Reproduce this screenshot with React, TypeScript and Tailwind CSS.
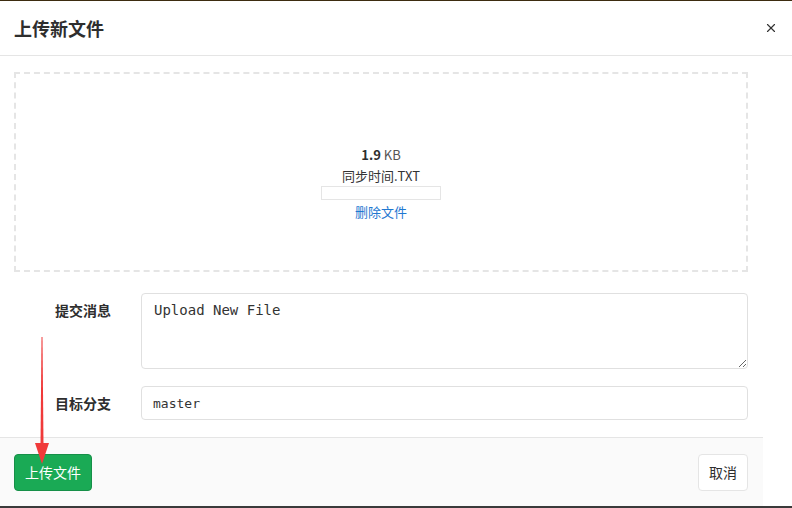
import { X } from "lucide-react";

const cjk = { fontFamily: '"Noto Sans CJK SC", "Noto Sans", sans-serif' };
const mono = { fontFamily: '"DejaVu Sans Mono", "Liberation Mono", monospace' };

function Arrow() {
  return (
    <svg className="absolute left-[30px] top-[334px]" width="24" height="132" viewBox="0 0 24 132">
      <polygon points="11.5,2 12.5,2 13.5,110 10.5,110" fill="#f03a3a" />
      <polygon points="5,108 19,108 12,129" fill="#f03a3a" />
    </svg>
  );
}

export default function App() {
  return (
    <div className="relative w-[792px] h-[508px] flex flex-col bg-white text-[#2e2e2e] border-t border-[#3d2c10] border-b-2 border-b-[#3a3a3a] overflow-hidden" style={cjk}>
      <div className="h-[55px] shrink-0 flex items-center justify-between px-[14px] border-b border-[#e5e5e5]">
        <h1 className="text-[18px] font-bold text-[#2e2e2e]">上传新文件</h1>
        <X className="w-[14px] h-[14px] text-[#333]" strokeWidth={2} />
      </div>

      <div className="flex-1 pl-[14px] pr-[44px] pt-[16px]">
        <div className="h-[200px] border-2 border-dashed border-[#e5e5e5] flex flex-col items-center pt-[70px] text-[13px] leading-[21px]">
          <div className="text-[#555]">
            <span className="font-bold text-[#2e2e2e]">1.9</span> KB
          </div>
          <div className="text-[#333]">同步时间.TXT</div>
          <div className="w-[120px] h-[14px] border border-[#e5e5e5]" />
          <a className="text-[#1f78d1] mt-[1px]">删除文件</a>
        </div>

        <div className="mt-[21px] flex">
          <label className="w-[97px] shrink-0 text-right text-[14px] font-bold pt-[7px]">提交消息</label>
          <textarea
            className="ml-[30px] flex-1 h-[76px] border border-[#e0e0e0] rounded-[4px] px-[12px] py-[6px] text-[14px] text-[#333] outline-none"
            style={mono}
            defaultValue="Upload New File"
          />
        </div>

        <div className="mt-[17px] flex items-center">
          <label className="w-[97px] shrink-0 text-right text-[14px] font-bold">目标分支</label>
          <input
            className="ml-[30px] flex-1 h-[34px] border border-[#e0e0e0] rounded-[4px] px-[11px] text-[13px] text-[#333] outline-none"
            style={mono}
            defaultValue="master"
          />
        </div>
      </div>

      <div className="w-[763px] h-[69px] shrink-0 bg-[#fafafa] border-t border-[#e5e5e5] flex items-start justify-between pl-[14px] pr-[15px] pt-[16px]">
        <button className="h-[37px] px-[10px] rounded-[4px] bg-[#1aaa55] border border-[#168f48] text-white text-[14px]">上传文件</button>
        <button className="h-[37px] px-[10px] rounded-[4px] bg-white border border-[#e5e5e5] text-[#2e2e2e] text-[14px]">取消</button>
      </div>

      <Arrow />
    </div>
  );
}
